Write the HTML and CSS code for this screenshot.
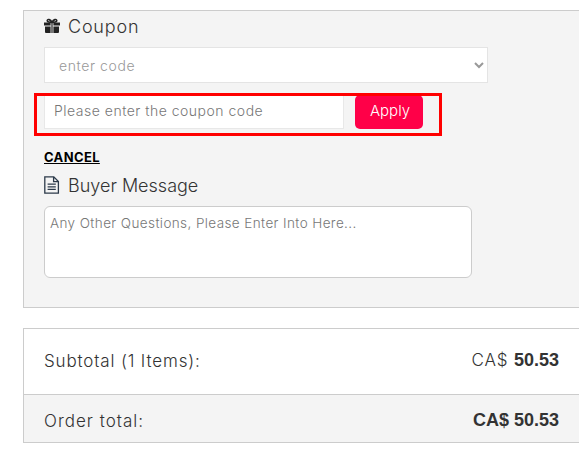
FILE: index.html
```html
<!DOCTYPE html>
<html>
<head>
    <meta charset="UTF-8">
    <title>Checkout</title>
    <link rel="stylesheet" href="styles.css">
</head>
<body>
    <div class="panel">
        <div class="section-title">
            <svg class="icon" viewBox="0 0 16 16"><path fill="#222" d="M0 4.6h6.6v3H0zM9.4 4.6H16v3H9.4zM1 8.6h5.6V15H2a1 1 0 0 1-1-1zM9.4 8.6H15V14a1 1 0 0 1-1 1H9.4zM7.4 4.6h1.2V15H7.4z"/><path fill="none" stroke="#222" stroke-width="1.6" d="M8 4.4C6.5 1.3 3.4.7 3.2 2.6 3.1 4.2 6 4.4 8 4.4zM8 4.4c1.5-3.1 4.6-3.7 4.8-1.8.1 1.6-2.8 1.8-4.8 1.8z"/></svg>
            <span class="coupon-title">Coupon</span>
        </div>
        <select class="code-select">
            <option>enter code</option>
        </select>
        <div class="coupon-row">
            <input type="text" class="coupon-input" placeholder="Please enter the coupon code">
            <button class="apply-btn">Apply</button>
            <div class="highlight"></div>
        </div>
        <a class="cancel" href="#">CANCEL</a>
        <div class="section-title message-title">
            <svg class="icon doc-icon" viewBox="0 0 16 18"><path fill="none" stroke="#2c3a4a" stroke-width="1.3" d="M.8.9h9l4.6 4.6v11.6H.8zM9.6 1v4.7h4.7"/><path fill="none" stroke="#2c3a4a" stroke-width="1.2" d="M3.6 8.2h8.2M3.6 10.8h8.2M3.6 13.4h8.2"/></svg>
            <span>Buyer Message</span>
        </div>
        <textarea class="message" placeholder="Any Other Questions, Please Enter Into Here..."></textarea>
    </div>

    <div class="totals">
        <div class="total-row subtotal">
            <span>Subtotal (1 Items):</span>
            <span>CA$ <b>50.53</b></span>
        </div>
        <div class="total-row order-total">
            <span>Order total:</span>
            <b>CA$ 50.53</b>
        </div>
    </div>
</body>
</html>
```

FILE: styles.css
```css
body {
    margin: 0;
    padding: 10px 0 0 23px;
    font-family: "Inter", "Open Sans", Arial, sans-serif;
    font-weight: 300;
    color: #333;
    background-color: #fff;
    overflow: hidden;
}
b {
    font-family: "Liberation Sans", Arial, sans-serif;
    font-size: 18px;
    font-weight: 700;
    letter-spacing: 0;
}
.panel {
    height: 298px;
    box-sizing: border-box;
    padding: 4px 0 0 20px;
    background-color: #f4f4f4;
    border: 1px solid #ccc;
    border-right: none;
}
.section-title {
    display: flex;
    align-items: center;
    height: 22px;
    font-size: 18px;
}
.coupon-title {
    letter-spacing: 0.8px;
}
.icon {
    width: 16px;
    height: 16px;
    margin-right: 8px;
}
.doc-icon {
    height: 18px;
}
.code-select {
    display: block;
    width: 444px;
    height: 36px;
    margin-top: 10px;
    padding-left: 10px;
    font-family: inherit;
    font-weight: 300;
    font-size: 14px;
    letter-spacing: 0.6px;
    color: #999;
    background-color: #fff;
    border: 1px solid #e4e4e4;
    border-radius: 0;
}
.coupon-row {
    position: relative;
    display: flex;
    gap: 11px;
    margin-top: 12px;
}
.coupon-input {
    width: 300px;
    height: 34px;
    box-sizing: border-box;
    padding: 0 10px 3px 9px;
    font-family: inherit;
    font-weight: 300;
    font-size: 14px;
    letter-spacing: 0.5px;
    background-color: #fff;
    border: 1px solid #e8e8e8;
}
.coupon-input::placeholder,
.message::placeholder {
    color: #777;
    opacity: 1;
}
.apply-btn {
    width: 68px;
    height: 34px;
    padding: 0 0 4px 2px;
    font-family: inherit;
    font-size: 15px;
    font-weight: 300;
    color: #fff;
    background-color: #ff0048;
    border: none;
    border-radius: 5px;
}
.highlight {
    position: absolute;
    left: -10px;
    top: -2px;
    width: 408px;
    height: 43px;
    box-sizing: border-box;
    border: 3px solid #f00;
}
.cancel {
    display: block;
    margin-top: 20px;
    font-size: 13px;
    line-height: 16px;
    font-weight: 700;
    letter-spacing: 0.35px;
    color: #000;
}
.message-title {
    margin-top: 9px;
}
.message {
    display: block;
    width: 428px;
    height: 72px;
    box-sizing: border-box;
    margin-top: 10px;
    padding: 8px 5px;
    font-family: inherit;
    font-weight: 300;
    font-size: 13.5px;
    letter-spacing: 0.4px;
    background-color: #fff;
    border: 1px solid #ccc;
    border-radius: 6px;
    resize: none;
}
.totals {
    margin-top: 20px;
    border: 1px solid #ccc;
    border-right: none;
}
.total-row {
    display: flex;
    justify-content: space-between;
    align-items: center;
    box-sizing: border-box;
    padding: 0 20px;
    font-size: 17px;
    letter-spacing: 0.85px;
}
.subtotal {
    height: 66px;
    padding-bottom: 2px;
    border-bottom: 1px solid #ccc;
}
.order-total {
    height: 47px;
    padding-top: 4px;
    letter-spacing: 1px;
    background-color: #f4f4f4;
}
```
